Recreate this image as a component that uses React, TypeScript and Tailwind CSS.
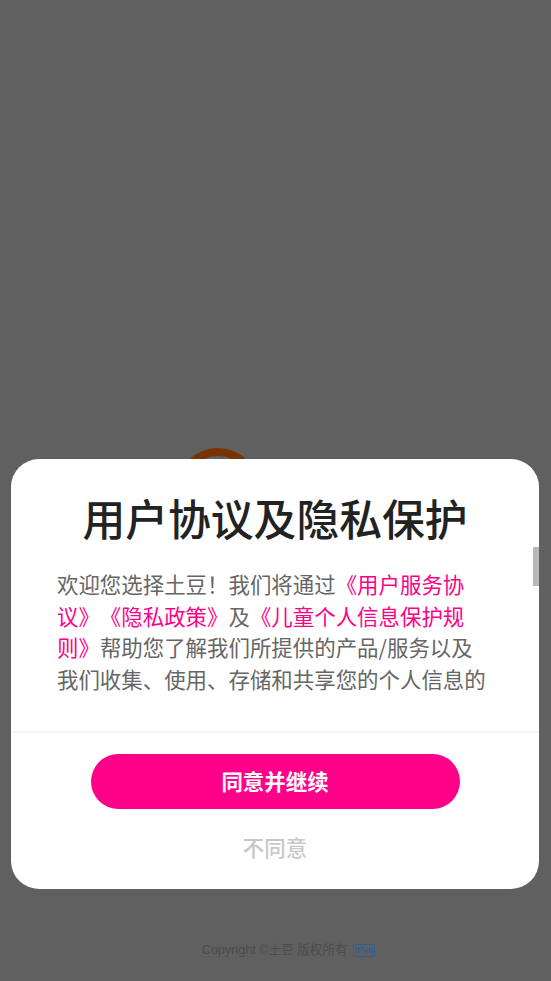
export default function App() {
  const font = { fontFamily: '"Noto Sans CJK SC", "Liberation Sans", sans-serif' };
  return (
    <div className="relative h-[981px] w-[551px] overflow-hidden bg-[#606060]" style={font}>
      <div className="flex h-full flex-col pt-[448px]">
        <svg className="ml-[177px] h-[82px] w-[82px]" viewBox="0 0 82 82">
          <circle cx="41" cy="41" r="37" fill="none" stroke="#7a3300" strokeWidth="8" />
        </svg>
        <div className="mt-auto mb-[22px] flex items-center justify-center gap-[5px] pl-[26px] font-['Liberation_Sans','Noto_Sans_CJK_SC',sans-serif] text-[12.6px] leading-[18px] text-[#4c4c4c]">
          <span>Copyright ©土豆 版权所有</span>
          <span className="rounded-[2px] border border-[#2f5f96] px-[1px] text-[9px] leading-[11px] font-bold text-[#2f5f96]">IPv6</span>
        </div>
      </div>
      <div className="absolute top-[459px] left-[11px] flex h-[430px] w-[528px] flex-col rounded-[28px] bg-white">
        <h1 className="mt-[28px] text-center text-[42.8px] leading-[60px] font-medium text-[#222222] [text-spacing-trim:space-all]">用户协议及隐私保护</h1>
        <div className="mt-[21px] mb-[33px] h-[130px] overflow-hidden">
          <p className="ml-[46px] w-[432px] text-[21.45px] leading-[31.7px] text-[#666666] [text-spacing-trim:space-all]">
            欢迎您选择土豆！我们将通过<span className="text-[#ff0088]">《用户服务协议》《隐私政策》</span>及<span className="text-[#ff0088]">《儿童个人信息保护规则》</span>帮助您了解我们所提供的产品/服务以及我们收集、使用、存储和共享您的个人信息的
          </p>
        </div>
        <div className="h-[2px] bg-[#f5f5f5]" />
        <button className="mx-auto mt-[21px] h-[55px] w-[369px] rounded-full bg-[#ff0088] text-[21.45px] font-bold text-white">同意并继续</button>
        <button className="mt-[21px] text-center text-[21.45px] leading-[34px] font-medium text-[#c8c8c8]">不同意</button>
        <div className="absolute top-[88px] right-0 h-[39px] w-[6px] bg-[#b8b8b8]" />
      </div>
    </div>
  );
}
